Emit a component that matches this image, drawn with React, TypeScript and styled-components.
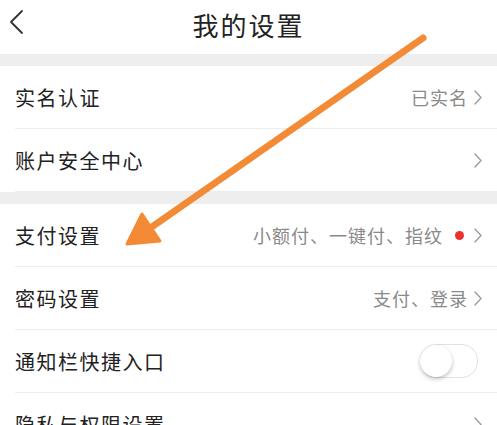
import styled, { createGlobalStyle } from "styled-components";

const GlobalStyle = createGlobalStyle`
  html, body {
    margin: 0;
    padding: 0;
    background: #ffffff;
  }
  body {
    font-family: "Noto Sans CJK SC", "Noto Sans", sans-serif;
    overflow: hidden;
  }
`;

interface RowItem {
  label: string;
  value?: string;
  dot?: boolean;
  toggle?: boolean;
}

const groups: RowItem[][] = [
  [{ label: "实名认证", value: "已实名" }, { label: "账户安全中心" }],
  [
    { label: "支付设置", value: "小额付、一键付、指纹", dot: true },
    { label: "密码设置", value: "支付、登录" },
    { label: "通知栏快捷入口", toggle: true },
    { label: "隐私与权限设置" },
  ],
];

function Chevron() {
  return (
    <svg width="8" height="15" viewBox="0 0 8 15" fill="none">
      <path d="M1 1l6 6.5L1 14" stroke="#9a9a9a" strokeWidth="1.3" strokeLinecap="round" strokeLinejoin="round" />
    </svg>
  );
}

export default function App() {
  return (
    <Page>
      <GlobalStyle />
      <Header>
        <BackButton>
          <svg width="16" height="26" viewBox="0 0 16 26" fill="none">
            <path d="M14 2L3 13l11 11" stroke="#333" strokeWidth="1.8" strokeLinecap="round" strokeLinejoin="round" />
          </svg>
        </BackButton>
        <Title>我的设置</Title>
      </Header>
      {groups.map((group, gi) => (
        <Group key={gi}>
          {group.map((item) => (
            <Row key={item.label}>
              <Label>{item.label}</Label>
              <Right>
                {item.value && <Value>{item.value}</Value>}
                {item.dot && <Dot />}
                {item.toggle ? (
                  <Toggle>
                    <Knob />
                  </Toggle>
                ) : (
                  <Chevron />
                )}
              </Right>
            </Row>
          ))}
        </Group>
      ))}
      <Arrow width="497" height="425" viewBox="0 0 497 425">
        <line x1="423" y1="38" x2="146" y2="231" stroke="#f28a36" strokeWidth="7" strokeLinecap="round" />
        <polygon points="127,244 160,241 142,214" fill="#f28a36" stroke="#f28a36" strokeWidth="3" strokeLinejoin="round" />
      </Arrow>
    </Page>
  );
}

const Page = styled("div")`
  position: relative;
  width: 497px;
  height: 425px;
  overflow: hidden;
  background: #ffffff;
`;

const Header = styled("div")`
  position: relative;
  height: 54px;
  display: flex;
  align-items: center;
  justify-content: center;
  background: #ffffff;
`;

const BackButton = styled("div")`
  position: absolute;
  left: 8px;
  top: 9px;
  display: flex;
`;

const Title = styled("div")`
  font-size: 26px;
  color: #222222;
  letter-spacing: 2px;
  margin-top: -6px;
`;

const Group = styled("div")`
  border-top: 12px solid #eeeeee;
  background: #ffffff;
`;

const Row = styled("div")`
  height: 62px;
  margin-left: 15px;
  padding-right: 15px;
  display: flex;
  align-items: center;
  justify-content: space-between;
  border-bottom: 1px solid #ececec;
`;

const Label = styled("div")`
  font-size: 20px;
  color: #222222;
  letter-spacing: 1.5px;
`;

const Right = styled("div")`
  display: flex;
  align-items: center;
  gap: 6px;
`;

const Value = styled("div")`
  font-size: 18px;
  color: #8a8a8a;
  letter-spacing: 1px;
`;

const Dot = styled("div")`
  width: 9px;
  height: 9px;
  border-radius: 50%;
  background: #e8322c;
  margin: 0 4px 0 6px;
`;

const Toggle = styled("div")`
  width: 56px;
  height: 32px;
  border-radius: 16px;
  border: 1px solid #e2e2e2;
  background: #ffffff;
  display: flex;
  align-items: center;
  margin-right: 4px;
`;

const Knob = styled("div")`
  width: 32px;
  height: 32px;
  border-radius: 50%;
  background: #ffffff;
  box-shadow: 0 2px 4px rgba(0, 0, 0, 0.25);
  margin-left: -1px;
`;

const Arrow = styled("svg")`
  position: absolute;
  left: 0;
  top: 0;
  pointer-events: none;
`;
